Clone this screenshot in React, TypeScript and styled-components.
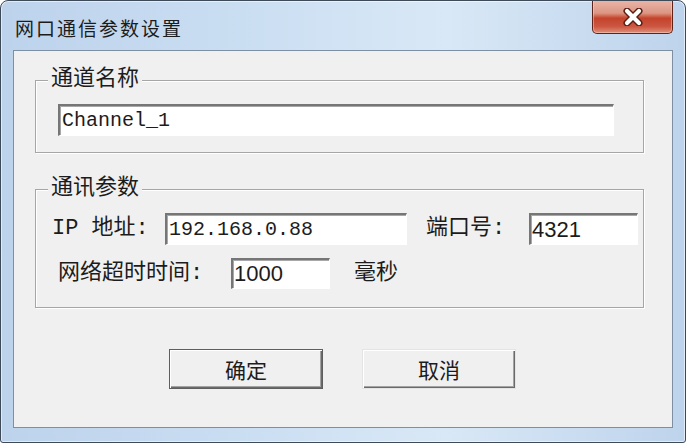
import React from "react";
import styled, { createGlobalStyle } from "styled-components";

const Global = createGlobalStyle`
  html, body { margin: 0; padding: 0; background: #ffffff; }
  body { width: 686px; height: 443px; overflow: hidden; }
`;

const CJK = `"Liberation Mono", "Noto Sans CJK SC", monospace`;

const Window = styled.div`
  box-sizing: border-box;
  width: 686px;
  height: 443px;
  border: 1px solid #3e4a58;
  border-radius: 8px 8px 3px 3px;
  background: linear-gradient(90deg, #bdd3ec 0%, #cadef2 35%, #d9e8f6 65%, #c9dcf0 85%, #bed4ec 100%);
  display: flex;
  flex-direction: column;
  overflow: hidden;
  box-shadow: inset 0 0 0 1px rgba(255, 255, 255, 0.55);
`;

const TitleBar = styled.div`
  box-sizing: border-box;
  height: 49px;
  flex: none;
  display: flex;
  justify-content: space-between;
  align-items: flex-start;
  padding: 0 12px 0 14px;
`;

const Title = styled.div`
  font-family: "Noto Sans CJK SC", sans-serif;
  font-size: 19px;
  letter-spacing: 2px;
  line-height: 26px;
  padding-top: 14px;
  color: #1c1c1c;
`;

const CloseButton = styled.div`
  box-sizing: border-box;
  width: 81px;
  height: 34px;
  margin-top: -1px;
  border: 1px solid #5f2419;
  border-top: none;
  border-radius: 0 0 5px 5px;
  background: linear-gradient(180deg, #eab7aa 0%, #dc9582 40%, #c4432c 55%, #cc5640 80%, #de8f7b 100%);
  box-shadow: inset 0 0 0 1px rgba(255, 220, 210, 0.45);
  display: flex;
  align-items: center;
  justify-content: center;
`;

const Client = styled.div`
  box-sizing: border-box;
  margin: 0 12px;
  height: 378px;
  flex: none;
  border: 1px solid #7d8fa3;
  background: #f0f0f0;
  padding: 29px 28px 0 21px;
  display: flex;
  flex-direction: column;
`;

const Group = styled.div<{ $gap?: number }>`
  position: relative;
  margin-top: ${(p) => p.$gap ?? 0}px;
  border: 1px solid #a6a6a6;
  box-shadow: inset 1px 1px 0 #ffffff, 1px 1px 0 #ffffff;
  display: flex;
  flex-direction: column;
`;

const Legend = styled.span`
  position: absolute;
  top: -14px;
  left: 12px;
  padding: 0 3px;
  background: #f0f0f0;
  font-family: ${CJK};
  font-size: 22px;
  line-height: 26px;
  color: #1c1c1c;
`;

const NameBody = styled.div`
  padding: 23px 0 16px 22px;
`;

const CommBody = styled.div`
  padding: 23px 0 18px 16px;
  display: flex;
  flex-direction: column;
  gap: 13px;
`;

const Row = styled.div<{ $indent?: number }>`
  display: flex;
  align-items: center;
  margin-left: ${(p) => p.$indent ?? 0}px;
`;

const Label = styled.span<{ $w: number; $ml?: number }>`
  width: ${(p) => p.$w}px;
  margin-left: ${(p) => p.$ml ?? 0}px;
  flex: none;
  font-family: ${CJK};
  font-size: 22px;
  line-height: 26px;
  color: #1c1c1c;
  white-space: nowrap;
`;

const TextBox = styled.input<{ $w: number; $h?: number; $sans?: boolean }>`
  box-sizing: border-box;
  width: ${(p) => p.$w}px;
  height: ${(p) => p.$h ?? 32}px;
  flex: none;
  margin: 0;
  padding: 0 0 0 ${(p) => (p.$sans ? 1 : 2)}px;
  border-style: solid;
  border-width: 2px 1px 1px 2px;
  border-color: #767676 #ffffff #ffffff #767676;
  box-shadow: inset 1px 1px 0 #a8a8a8;
  background: #ffffff;
  outline: none;
  color: #1c1c1c;
  font-family: ${(p) => (p.$sans ? `"Liberation Sans", Arial, sans-serif` : `"Liberation Mono", monospace`)};
  font-size: ${(p) => (p.$sans ? 22 : 20)}px;
`;

const ButtonRow = styled.div`
  display: flex;
  gap: 39px;
  margin-top: 41px;
  padding-left: 134px;
`;

const Button = styled.button<{ $default?: boolean }>`
  box-sizing: border-box;
  width: 154px;
  height: 40px;
  margin: 0;
  padding: 0;
  background: #f0f0f0;
  border: 1px solid ${(p) => (p.$default ? "#5e5e5e" : "#e4e4e4")};
  box-shadow: inset 1px 1px 0 #ffffff, inset -1px -1px 0 #6a6a6a, inset -2px -2px 0 #a3a3a3;
  font-family: "Noto Sans CJK SC", sans-serif;
  font-size: 21px;
  color: #1c1c1c;
  display: flex;
  align-items: center;
  justify-content: center;
`;

const CloseGlyph = () => (
  <svg width="24" height="18" viewBox="0 0 24 18">
    <path d="M6 3 L18 15 M18 3 L6 15" stroke="#5a1d13" strokeWidth="7" strokeLinecap="round" />
    <path d="M6 3 L18 15 M18 3 L6 15" stroke="#ffffff" strokeWidth="4.2" strokeLinecap="round" />
  </svg>
);

export default function App() {
  return (
    <>
      <Global />
      <Window>
        <TitleBar>
          <Title>网口通信参数设置</Title>
          <CloseButton>
            <CloseGlyph />
          </CloseButton>
        </TitleBar>
        <Client>
          <Group>
            <Legend>通道名称</Legend>
            <NameBody>
              <TextBox $w={556} readOnly value="Channel_1" />
            </NameBody>
          </Group>
          <Group $gap={36}>
            <Legend>通讯参数</Legend>
            <CommBody>
              <Row>
                <Label $w={113}>IP 地址:</Label>
                <TextBox $w={242} readOnly value="192.168.0.88" />
                <Label $w={103} $ml={19}>端口号:</Label>
                <TextBox $w={109} $sans readOnly value="4321" />
              </Row>
              <Row $indent={6}>
                <Label $w={173}>网络超时时间:</Label>
                <TextBox $w={99} $h={31} $sans readOnly value="1000" />
                <Label $w={60} $ml={24}>毫秒</Label>
              </Row>
            </CommBody>
          </Group>
          <ButtonRow>
            <Button $default>确定</Button>
            <Button>取消</Button>
          </ButtonRow>
        </Client>
      </Window>
    </>
  );
}
